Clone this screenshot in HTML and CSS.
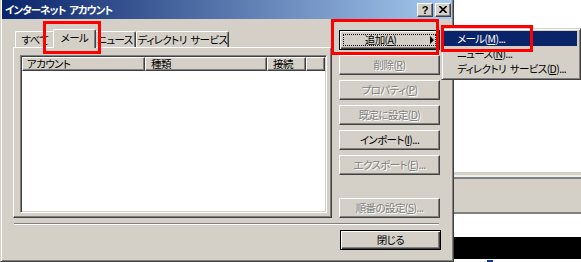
FILE: index.html
```html
<!DOCTYPE html>
<html lang="ja">
<head>
    <meta charset="UTF-8">
    <title>インターネット アカウント</title>
    <link rel="stylesheet" href="styles.css">
</head>
<body>
<div class="screen">

    <!-- Dialog window -->
    <div class="dialog">
        <div class="titlebar">
            <span class="title">インターネット アカウント</span>
            <div class="caption-buttons">
                <span class="cap-btn cap-help">?</span>
                <span class="cap-btn">
                    <svg width="8" height="7" viewBox="0 0 8 7"><path d="M0.5 0 L7.5 7 M7.5 0 L0.5 7" stroke="#000" stroke-width="1.6"/></svg>
                </span>
            </div>
        </div>

        <div class="main">
            <div class="left">
                <div class="tabs">
                    <div class="tab tab-all">すべて</div>
                    <div class="tab tab-mail active">メール</div>
                    <div class="tab tab-news">ニュース</div>
                    <div class="tab tab-dir">ディレクトリ サービス</div>
                </div>
                <div class="panel">
                    <div class="list">
                        <div class="list-head">
                            <div class="col col-account">アカウント</div>
                            <div class="col col-type">種類</div>
                            <div class="col col-conn">接続</div>
                            <div class="col col-fill"></div>
                        </div>
                    </div>
                </div>
            </div>

            <div class="buttons">
                <button class="btn btn-default btn-focus has-arrow">追加(<u>A</u>)<span class="arrow"></span></button>
                <button class="btn" disabled>削除(<u>R</u>)</button>
                <button class="btn" disabled>プロパティ(<u>P</u>)</button>
                <button class="btn" disabled>既定に設定(<u>D</u>)</button>
                <button class="btn">インポート(<u>I</u>)...</button>
                <button class="btn" disabled>エクスポート(<u>E</u>)...</button>
                <button class="btn btn-last" disabled>順番の設定(<u>S</u>)...</button>
            </div>
        </div>

        <div class="separator"></div>

        <div class="footer">
            <button class="btn btn-default">閉じる</button>
        </div>
    </div>

    <!-- Window behind the dialog -->
    <div class="backdrop">
        <div class="bd-white"></div>
        <div class="bd-light"></div>
        <div class="bd-pale"></div>
        <div class="bd-dark"></div>
        <div class="bd-field"></div>
        <div class="bd-dark"></div>
        <div class="bd-white"></div>
        <div class="bd-black"></div>
        <div class="bd-bottom"><span class="bd-blue"></span></div>
    </div>

    <!-- Popup menu of the Add button -->
    <div class="menu">
        <div class="menu-item selected">メール(<u>M</u>)...</div>
        <div class="menu-item">ニュース(<u>N</u>)...</div>
        <div class="menu-item">ディレクトリ サービス(<u>D</u>)...</div>
    </div>

    <!-- Red highlight marks -->
    <div class="mark mark-tab"></div>
    <div class="mark mark-add"></div>
    <div class="mark mark-menu"></div>
</div>
</body>
</html>
```

FILE: styles.css
```css
/* Page */
html, body {
    margin: 0;
    padding: 0;
    background: #fff;
}

body {
    font-family: "Noto Sans CJK JP", "Noto Sans", sans-serif;
    font-size: 10.5px;
    font-feature-settings: "palt";
    letter-spacing: -0.6px;
    word-spacing: 2px;
    white-space: nowrap;
    color: #000;
}

.screen {
    position: relative;
    display: flex;
    width: 581px;
    height: 262px;
    overflow: hidden;
}

/* Dialog frame */
.dialog {
    width: 454px;
    height: 262px;
    box-sizing: border-box;
    flex-shrink: 0;
    display: flex;
    flex-direction: column;
    background: #d4d0c8;
    border-left: 1px solid #d4d0c8;
    border-right: 1px solid #404040;
    border-bottom: 1px solid #404040;
    box-shadow: inset 1px 0 #fff, inset -1px -1px #808080;
    padding: 0 1px;
}

/* Title bar */
.titlebar {
    height: 19px;
    flex-shrink: 0;
    display: flex;
    align-items: center;
    justify-content: space-between;
    background: linear-gradient(to right, #0a246a, #a6caf0);
    padding-left: 3px;
}

.title {
    color: #fff;
    font-weight: bold;
    line-height: 19px;
    letter-spacing: -0.9px;
}

.caption-buttons {
    display: flex;
    gap: 2px;
    margin-right: 1px;
}

.cap-btn {
    width: 14px;
    height: 12px;
    display: flex;
    align-items: center;
    justify-content: center;
    background: #d4d0c8;
    border: 1px solid;
    border-color: #fff #404040 #404040 #fff;
    box-shadow: inset -1px -1px #808080;
    font-family: "Liberation Sans", sans-serif;
    font-weight: bold;
    font-size: 11px;
    letter-spacing: 0;
    line-height: 12px;
}

/* Main area: tab control + button column */
.main {
    display: flex;
    padding: 10px 0 0 11px;
    gap: 7px;
}

.left {
    width: 319px;
}

.tabs {
    height: 18px;
    display: flex;
    align-items: flex-end;
    padding-left: 2px;
}

.tab {
    height: 16px;
    flex-shrink: 0;
    box-sizing: border-box;
    display: flex;
    align-items: center;
    justify-content: center;
    border-top: 1px solid #fff;
    border-left: 1px solid #fff;
    border-right: 1px solid #404040;
    box-shadow: inset -1px 0 #808080;
    border-radius: 2px 2px 0 0;
    line-height: 14px;
}

.tab-all { width: 40px; }
.tab-mail { width: 39px; }
.tab-news { width: 42px; }
.tab-dir { width: 93px; }

.tab.active {
    position: relative;
    z-index: 1;
    width: 43px;
    height: 19px;
    margin: 0 -2px -1px -2px;
    padding-bottom: 2px;
    background: #d4d0c8;
}

.panel {
    height: 171px;
    box-sizing: border-box;
    border: 1px solid;
    border-color: #fff #404040 #404040 #fff;
    box-shadow: inset -1px -1px #808080;
    padding: 7px 4px 4px 6px;
}

/* List view */
.list {
    height: 158px;
    box-sizing: border-box;
    background: #fff;
    border: 1px solid;
    border-color: #808080 #fff #fff #808080;
    box-shadow: inset 1px 1px #404040, inset -1px -1px #d4d0c8;
    padding: 1px;
}

.list-head {
    display: flex;
    height: 14px;
}

.col {
    box-sizing: border-box;
    height: 14px;
    background: #d4d0c8;
    border: 1px solid;
    border-color: #fff #404040 #404040 #fff;
    box-shadow: inset -1px -1px #808080;
    padding-left: 4px;
    line-height: 12px;
}

.col-account { width: 123px; }
.col-type { width: 122px; padding-left: 5px; }
.col-conn { width: 39px; padding-left: 5px; }
.col-fill { flex: 1; }

/* Buttons */
.buttons {
    width: 101px;
    display: flex;
    flex-direction: column;
    gap: 5px;
    padding-top: 1px;
}

.btn {
    position: relative;
    width: 101px;
    height: 20px;
    box-sizing: border-box;
    padding: 0;
    margin: 0;
    font: inherit;
    font-feature-settings: "palt";
    letter-spacing: -0.6px;
    line-height: 16px;
    color: #000;
    background: #d4d0c8;
    border: 1px solid;
    border-color: #fff #404040 #404040 #fff;
    box-shadow: inset -1px -1px #808080;
    border-radius: 0;
}

.btn u {
    text-underline-offset: 1px;
}

.btn:disabled {
    color: #808080;
    text-shadow: 1px 1px #fff;
}

.btn-default {
    border: 1px solid #000;
    box-shadow: inset 1px 1px #fff, inset -1px -1px #404040, inset -2px -2px #808080;
}

.btn-focus {
    outline: 1px dotted #000;
    outline-offset: -5px;
}

.has-arrow {
    padding-right: 18px;
}

.arrow {
    position: absolute;
    right: 5px;
    top: 5px;
    width: 0;
    height: 0;
    border-left: 4px solid #000;
    border-top: 4px solid transparent;
    border-bottom: 4px solid transparent;
}

.btn-last {
    margin-top: auto;
}

/* Bottom separator and close button */
.separator {
    margin: 5px 0 0 12px;
    width: 425px;
    height: 1px;
    background: #808080;
    border-bottom: 1px solid #fff;
}

.footer {
    display: flex;
    justify-content: flex-end;
    padding: 5px 11px 0 0;
}

/* Window behind the dialog */
.backdrop {
    flex: 1;
    display: grid;
    grid-template-rows: 172px 3px 2px 2px 33px 2px 23px 22px 3px;
}

.bd-white { background: #fff; }
.bd-light { background: #d4d0c8; }
.bd-pale { background: #f0f0f0; }
.bd-dark { background: #808080; }
.bd-field { background: #d4d0c8; }
.bd-black { background: #000; }

.bd-bottom {
    background: #fff;
    position: relative;
}

.bd-blue {
    position: absolute;
    left: 33px;
    top: 1px;
    width: 6px;
    height: 2px;
    background: #0a3ca8;
}

/* Popup menu */
.menu {
    position: absolute;
    left: 441px;
    top: 28px;
    width: 140px;
    box-sizing: border-box;
    background: #d4d0c8;
    border: 1px solid;
    border-color: #d4d0c8 #404040 #404040 #d4d0c8;
    box-shadow: inset 1px 1px #fff, inset -1px -1px #808080;
    padding: 2px 3px 3px 2px;
}

.menu-item {
    height: 15px;
    line-height: 15px;
    padding-left: 13px;
}

.menu-item.selected {
    background: #0a246a;
    color: #fff;
}

/* Red annotation boxes */
.mark {
    position: absolute;
    box-sizing: border-box;
    border: 3px solid #ff0000;
}

.mark-tab {
    left: 43px;
    top: 21px;
    width: 58px;
    height: 33px;
}

.mark-add {
    left: 331px;
    top: 19px;
    width: 108px;
    height: 36px;
}

.mark-menu {
    left: 441px;
    top: 25px;
    width: 92px;
    height: 27px;
}
```
